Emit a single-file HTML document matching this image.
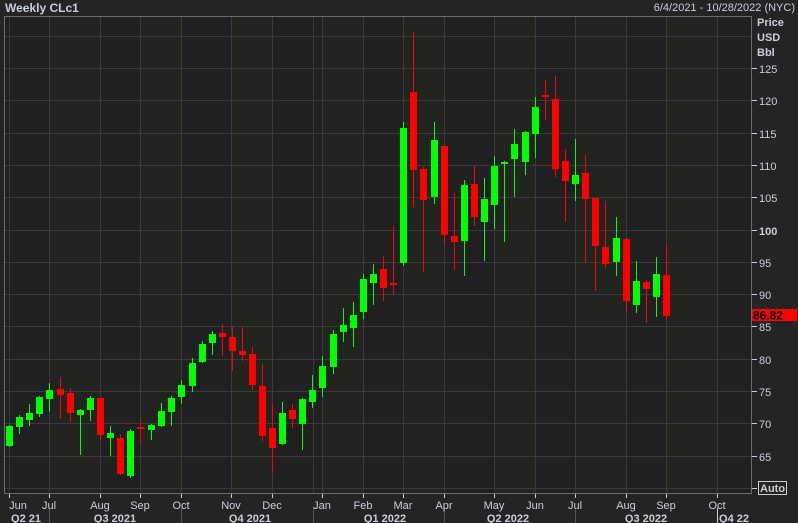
<!DOCTYPE html>
<html><head><meta charset="utf-8"><style>
html,body{margin:0;padding:0;background:#232323;}
svg{display:block;font-family:"Liberation Sans",sans-serif;}
</style></head><body>
<svg width="798" height="523" viewBox="0 0 798 523" xmlns="http://www.w3.org/2000/svg">
<rect width="798" height="523" fill="#242424"/>
<text x="5" y="12" font-size="12" font-weight="bold" fill="#c6cede">Weekly CLc1</text>
<text x="795" y="11" font-size="11" fill="#c6cede" text-anchor="end">6/4/2021 - 10/28/2022 (NYC)</text>
<!-- plot bg -->
<rect x="4" y="16" width="748" height="478" fill="#201f22"/>
<g fill="#222420">
<rect x="49" y="16" width="51" height="478"/><rect x="140" y="16" width="41" height="478"/>
<rect x="231" y="16" width="41" height="478"/><rect x="322" y="16" width="41" height="478"/>
<rect x="403" y="16" width="41" height="478"/><rect x="494" y="16" width="41" height="478"/>
<rect x="575" y="16" width="51" height="478"/><rect x="666" y="16" width="51" height="478"/>
</g>
<g stroke="#3a3a3a" stroke-width="1">
<line x1="9.5" y1="16" x2="9.5" y2="494"/><line x1="49.5" y1="16" x2="49.5" y2="494"/>
<line x1="100.5" y1="16" x2="100.5" y2="494"/><line x1="140.5" y1="16" x2="140.5" y2="494"/>
<line x1="181.5" y1="16" x2="181.5" y2="494"/><line x1="231.5" y1="16" x2="231.5" y2="494"/>
<line x1="272.5" y1="16" x2="272.5" y2="494"/><line x1="313.5" y1="16" x2="313.5" y2="494"/>
<line x1="322.5" y1="16" x2="322.5" y2="494"/><line x1="363.5" y1="16" x2="363.5" y2="494"/>
<line x1="403.5" y1="16" x2="403.5" y2="494"/><line x1="444.5" y1="16" x2="444.5" y2="494"/>
<line x1="494.5" y1="16" x2="494.5" y2="494"/><line x1="535.5" y1="16" x2="535.5" y2="494"/>
<line x1="575.5" y1="16" x2="575.5" y2="494"/><line x1="626.5" y1="16" x2="626.5" y2="494"/>
<line x1="666.5" y1="16" x2="666.5" y2="494"/><line x1="717.5" y1="16" x2="717.5" y2="494"/>
<line x1="4" y1="36.5" x2="752" y2="36.5"/><line x1="4" y1="68.5" x2="752" y2="68.5"/>
<line x1="4" y1="100.5" x2="752" y2="100.5"/><line x1="4" y1="133.5" x2="752" y2="133.5"/>
<line x1="4" y1="165.5" x2="752" y2="165.5"/><line x1="4" y1="197.5" x2="752" y2="197.5"/>
<line x1="4" y1="230.5" x2="752" y2="230.5"/><line x1="4" y1="262.5" x2="752" y2="262.5"/>
<line x1="4" y1="294.5" x2="752" y2="294.5"/><line x1="4" y1="326.5" x2="752" y2="326.5"/>
<line x1="4" y1="359.5" x2="752" y2="359.5"/><line x1="4" y1="391.5" x2="752" y2="391.5"/>
<line x1="4" y1="423.5" x2="752" y2="423.5"/><line x1="4" y1="456.5" x2="752" y2="456.5"/>
<line x1="4" y1="488.5" x2="752" y2="488.5"/>
</g>
<rect x="4.5" y="16.5" width="747" height="477" fill="none" stroke="#6c6c6c"/>
<!-- candles -->
<g id="c">
<g stroke="#00ff00" fill="#00ff00">
<line x1="9.5" y1="425" x2="9.5" y2="447"/><rect x="6" y="426" width="7" height="20" stroke="none"/>
<line x1="19.5" y1="415" x2="19.5" y2="434"/><rect x="16" y="417" width="7" height="10" stroke="none"/>
<line x1="29.5" y1="404" x2="29.5" y2="426"/><rect x="26" y="413" width="7" height="7" stroke="none"/>
<line x1="39.5" y1="396" x2="39.5" y2="417"/><rect x="36" y="397" width="7" height="17" stroke="none"/>
<line x1="49.5" y1="383" x2="49.5" y2="412"/><rect x="46" y="390" width="7" height="9" stroke="none"/>
<line x1="80.5" y1="409" x2="80.5" y2="455"/><rect x="77" y="410" width="7" height="5" stroke="none"/>
<line x1="90.5" y1="396" x2="90.5" y2="421"/><rect x="87" y="398" width="7" height="12" stroke="none"/>
<line x1="110.5" y1="426" x2="110.5" y2="456"/><rect x="107" y="433" width="7" height="5" stroke="none"/>
<line x1="130.5" y1="429" x2="130.5" y2="478"/><rect x="127" y="431" width="7" height="45" stroke="none"/>
<line x1="151.5" y1="424" x2="151.5" y2="440"/><rect x="148" y="425" width="7" height="5" stroke="none"/>
<line x1="161.5" y1="403" x2="161.5" y2="427"/><rect x="158" y="411" width="7" height="15" stroke="none"/>
<line x1="171.5" y1="396" x2="171.5" y2="426"/><rect x="168" y="398" width="7" height="14" stroke="none"/>
<line x1="181.5" y1="380" x2="181.5" y2="404"/><rect x="178" y="385" width="7" height="12" stroke="none"/>
<line x1="192.5" y1="358" x2="192.5" y2="392"/><rect x="189" y="363" width="7" height="23" stroke="none"/>
<line x1="202.5" y1="341" x2="202.5" y2="363"/><rect x="199" y="344" width="7" height="18" stroke="none"/>
<line x1="212.5" y1="331" x2="212.5" y2="355"/><rect x="209" y="334" width="7" height="9" stroke="none"/>
<line x1="282.5" y1="402" x2="282.5" y2="445"/><rect x="279" y="413" width="7" height="31" stroke="none"/>
<line x1="302.5" y1="398" x2="302.5" y2="450"/><rect x="299" y="399" width="7" height="25" stroke="none"/>
<line x1="312.5" y1="375" x2="312.5" y2="408"/><rect x="309" y="390" width="7" height="12" stroke="none"/>
<line x1="322.5" y1="356" x2="322.5" y2="397"/><rect x="319" y="366" width="7" height="22" stroke="none"/>
<line x1="333.5" y1="330" x2="333.5" y2="374"/><rect x="330" y="334" width="7" height="33" stroke="none"/>
<line x1="343.5" y1="308" x2="343.5" y2="342"/><rect x="340" y="325" width="7" height="7" stroke="none"/>
<line x1="353.5" y1="302" x2="353.5" y2="347"/><rect x="350" y="315" width="7" height="13" stroke="none"/>
<line x1="363.5" y1="274" x2="363.5" y2="319"/><rect x="360" y="279" width="7" height="33" stroke="none"/>
<line x1="373.5" y1="264" x2="373.5" y2="305"/><rect x="370" y="274" width="7" height="9" stroke="none"/>
<line x1="403.5" y1="122" x2="403.5" y2="266"/><rect x="400" y="128" width="7" height="135" stroke="none"/>
<line x1="434.5" y1="122" x2="434.5" y2="204"/><rect x="431" y="140" width="7" height="57" stroke="none"/>
<line x1="464.5" y1="180" x2="464.5" y2="276"/><rect x="461" y="185" width="7" height="56" stroke="none"/>
<line x1="484.5" y1="178" x2="484.5" y2="261"/><rect x="481" y="199" width="7" height="23" stroke="none"/>
<line x1="494.5" y1="156" x2="494.5" y2="229"/><rect x="491" y="166" width="7" height="39" stroke="none"/>
<line x1="504.5" y1="161" x2="504.5" y2="242"/><rect x="501" y="162" width="7" height="2" stroke="none"/>
<line x1="514.5" y1="129" x2="514.5" y2="197"/><rect x="511" y="144" width="7" height="15" stroke="none"/>
<line x1="525.5" y1="131" x2="525.5" y2="175"/><rect x="522" y="132" width="7" height="30" stroke="none"/>
<line x1="535.5" y1="97" x2="535.5" y2="158"/><rect x="532" y="107" width="7" height="27" stroke="none"/>
<line x1="575.5" y1="139" x2="575.5" y2="201"/><rect x="572" y="175" width="7" height="9" stroke="none"/>
<line x1="616.5" y1="217" x2="616.5" y2="276"/><rect x="613" y="238" width="7" height="24" stroke="none"/>
<line x1="636.5" y1="261" x2="636.5" y2="313"/><rect x="633" y="281" width="7" height="24" stroke="none"/>
<line x1="656.5" y1="257" x2="656.5" y2="317"/><rect x="653" y="274" width="7" height="23" stroke="none"/>
</g>
<g stroke="#ff0000" fill="#ff0000">
<line x1="60.5" y1="377" x2="60.5" y2="419"/><rect x="57" y="389" width="7" height="6" stroke="none"/>
<line x1="70.5" y1="388" x2="70.5" y2="422"/><rect x="67" y="393" width="7" height="20" stroke="none"/>
<line x1="100.5" y1="398" x2="100.5" y2="440"/><rect x="97" y="398" width="7" height="37" stroke="none"/>
<line x1="120.5" y1="434" x2="120.5" y2="475"/><rect x="117" y="438" width="7" height="36" stroke="none"/>
<line x1="140.5" y1="419" x2="140.5" y2="443"/><rect x="137" y="427" width="7" height="2" stroke="none"/>
<line x1="222.5" y1="324" x2="222.5" y2="356"/><rect x="219" y="333" width="7" height="4" stroke="none"/>
<line x1="232.5" y1="327" x2="232.5" y2="371"/><rect x="229" y="337" width="7" height="14" stroke="none"/>
<line x1="242.5" y1="327" x2="242.5" y2="361"/><rect x="239" y="351" width="7" height="4" stroke="none"/>
<line x1="252.5" y1="347" x2="252.5" y2="390"/><rect x="249" y="354" width="7" height="31" stroke="none"/>
<line x1="262.5" y1="364" x2="262.5" y2="441"/><rect x="259" y="386" width="7" height="50" stroke="none"/>
<line x1="272.5" y1="404" x2="272.5" y2="473"/><rect x="269" y="428" width="7" height="20" stroke="none"/>
<line x1="292.5" y1="404" x2="292.5" y2="428"/><rect x="289" y="410" width="7" height="9" stroke="none"/>
<line x1="383.5" y1="256" x2="383.5" y2="301"/><rect x="380" y="269" width="7" height="19" stroke="none"/>
<line x1="393.5" y1="226" x2="393.5" y2="295"/><rect x="390" y="283" width="7" height="2" stroke="none"/>
<line x1="413.5" y1="32" x2="413.5" y2="207"/><rect x="410" y="92" width="7" height="78" stroke="none"/>
<line x1="423.5" y1="167" x2="423.5" y2="272"/><rect x="420" y="169" width="7" height="31" stroke="none"/>
<line x1="444.5" y1="146" x2="444.5" y2="245"/><rect x="441" y="146" width="7" height="89" stroke="none"/>
<line x1="454.5" y1="193" x2="454.5" y2="270"/><rect x="451" y="236" width="7" height="6" stroke="none"/>
<line x1="474.5" y1="166" x2="474.5" y2="226"/><rect x="471" y="184" width="7" height="33" stroke="none"/>
<line x1="545.5" y1="80" x2="545.5" y2="120"/><rect x="542" y="95" width="7" height="2" stroke="none"/>
<line x1="555.5" y1="76" x2="555.5" y2="177"/><rect x="552" y="99" width="7" height="70" stroke="none"/>
<line x1="565.5" y1="149" x2="565.5" y2="222"/><rect x="562" y="161" width="7" height="20" stroke="none"/>
<line x1="585.5" y1="155" x2="585.5" y2="263"/><rect x="582" y="173" width="7" height="26" stroke="none"/>
<line x1="595.5" y1="198" x2="595.5" y2="291"/><rect x="592" y="198" width="7" height="48" stroke="none"/>
<line x1="605.5" y1="201" x2="605.5" y2="268"/><rect x="602" y="247" width="7" height="17" stroke="none"/>
<line x1="626.5" y1="238" x2="626.5" y2="313"/><rect x="623" y="239" width="7" height="62" stroke="none"/>
<line x1="646.5" y1="280" x2="646.5" y2="323"/><rect x="643" y="282" width="7" height="7" stroke="none"/>
<line x1="666.5" y1="245" x2="666.5" y2="320"/><rect x="663" y="275" width="7" height="41" stroke="none"/>
</g>
</g>
<!-- right axis -->
<g font-size="11" fill="#c8cfdc">
<text x="757" y="26" font-weight="bold">Price</text>
<text x="757" y="41" font-weight="bold">USD</text>
<text x="757" y="56" font-weight="bold">Bbl</text>
<g stroke="#c8cfdc"><line x1="752" y1="68.5" x2="757" y2="68.5"/><line x1="752" y1="100.5" x2="757" y2="100.5"/><line x1="752" y1="133.5" x2="757" y2="133.5"/><line x1="752" y1="165.5" x2="757" y2="165.5"/><line x1="752" y1="197.5" x2="757" y2="197.5"/><line x1="752" y1="230.5" x2="757" y2="230.5"/><line x1="752" y1="262.5" x2="757" y2="262.5"/><line x1="752" y1="294.5" x2="757" y2="294.5"/><line x1="752" y1="326.5" x2="757" y2="326.5"/><line x1="752" y1="359.5" x2="757" y2="359.5"/><line x1="752" y1="391.5" x2="757" y2="391.5"/><line x1="752" y1="423.5" x2="757" y2="423.5"/><line x1="752" y1="456.5" x2="757" y2="456.5"/><line x1="752" y1="488.5" x2="757" y2="488.5"/></g>
<text x="759" y="73">125</text><text x="759" y="105">120</text><text x="759" y="138">115</text>
<text x="759" y="170">110</text><text x="759" y="202">105</text><text x="759" y="235" font-weight="bold">100</text>
<text x="759" y="267">95</text><text x="759" y="299">90</text><text x="759" y="331">85</text>
<text x="759" y="364">80</text><text x="759" y="396">75</text><text x="759" y="428">70</text>
<text x="759" y="461">65</text>
</g>
<rect x="752" y="309" width="45" height="12" fill="#ff0000"/>
<text x="753" y="319.5" font-size="12" font-weight="bold" fill="#000">86.82</text>
<rect x="758.5" y="481.5" width="28" height="13" fill="#242424" stroke="#c8cfdc"/>
<text x="760" y="492" font-size="11" font-weight="bold" fill="#c8cfdc">Auto</text>
<!-- bottom axis -->
<g stroke="#c8cfdc"><line x1="9.5" y1="494" x2="9.5" y2="498"/><line x1="49.5" y1="494" x2="49.5" y2="498"/><line x1="100.5" y1="494" x2="100.5" y2="498"/><line x1="140.5" y1="494" x2="140.5" y2="498"/><line x1="181.5" y1="494" x2="181.5" y2="498"/><line x1="231.5" y1="494" x2="231.5" y2="498"/><line x1="272.5" y1="494" x2="272.5" y2="498"/><line x1="322.5" y1="494" x2="322.5" y2="498"/><line x1="363.5" y1="494" x2="363.5" y2="498"/><line x1="403.5" y1="494" x2="403.5" y2="498"/><line x1="444.5" y1="494" x2="444.5" y2="498"/><line x1="494.5" y1="494" x2="494.5" y2="498"/><line x1="535.5" y1="494" x2="535.5" y2="498"/><line x1="575.5" y1="494" x2="575.5" y2="498"/><line x1="626.5" y1="494" x2="626.5" y2="498"/><line x1="666.5" y1="494" x2="666.5" y2="498"/><line x1="717.5" y1="494" x2="717.5" y2="498"/></g>
<g stroke="#555"><line x1="49.5" y1="508" x2="49.5" y2="523"/><line x1="181.5" y1="508" x2="181.5" y2="523"/><line x1="313.5" y1="508" x2="313.5" y2="523"/><line x1="444.5" y1="508" x2="444.5" y2="523"/><line x1="575.5" y1="508" x2="575.5" y2="523"/></g>
<line x1="717.5" y1="508" x2="717.5" y2="523" stroke="#c8cfdc"/>
<g font-size="11" fill="#c8cfdc" text-anchor="middle">
<text x="18" y="509">Jun</text><text x="49" y="509">Jul</text><text x="100" y="509">Aug</text><text x="140" y="509">Sep</text>
<text x="181" y="509">Oct</text><text x="231" y="509">Nov</text><text x="272" y="509">Dec</text><text x="322" y="509">Jan</text>
<text x="363" y="509">Feb</text><text x="403" y="509">Mar</text><text x="444" y="509">Apr</text><text x="494" y="509">May</text>
<text x="535" y="509">Jun</text><text x="575" y="509">Jul</text><text x="626" y="509">Aug</text><text x="666" y="509">Sep</text>
<text x="717" y="509">Oct</text>
</g>
<g font-size="11" font-weight="bold" fill="#c8cfdc" text-anchor="middle">
<text x="26" y="522">Q2 21</text><text x="115" y="522">Q3 2021</text><text x="250" y="522">Q4 2021</text>
<text x="385" y="522">Q1 2022</text><text x="508" y="522">Q2 2022</text><text x="646" y="522">Q3 2022</text>
<text x="734" y="522">Q4 22</text>
</g>
</svg>
</body></html>
